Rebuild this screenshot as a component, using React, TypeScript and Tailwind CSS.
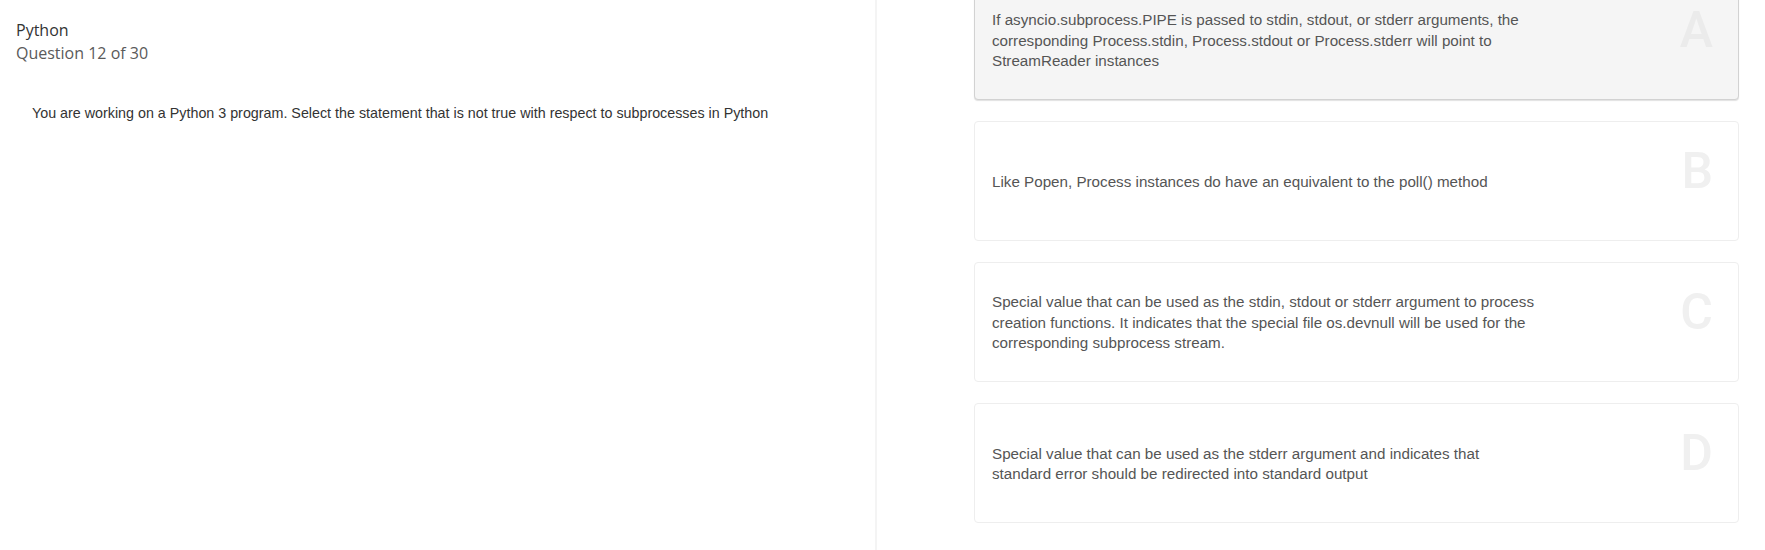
import React from "react";

const options = [
  {
    letter: "A",
    text: "If asyncio.subprocess.PIPE is passed to stdin, stdout, or stderr arguments, the corresponding Process.stdin, Process.stdout or Process.stderr will point to StreamReader instances",
    selected: true,
  },
  {
    letter: "B",
    text: "Like Popen, Process instances do have an equivalent to the poll() method",
    selected: false,
  },
  {
    letter: "C",
    text: "Special value that can be used as the stdin, stdout or stderr argument to process creation functions. It indicates that the special file os.devnull will be used for the corresponding subprocess stream.",
    selected: false,
  },
  {
    letter: "D",
    text: "Special value that can be used as the stderr argument and indicates that standard error should be redirected into standard output",
    selected: false,
  },
];

export default function App() {
  return (
    <div className="flex h-[550px] w-full overflow-hidden bg-white">
      <div className="w-[877px] shrink-0 border-r-2 border-[#f4f4f4] pt-[19px]">
        <div className="pl-[16px] font-['Open_Sans',sans-serif] text-[16px] leading-[23px]">
          <div className="text-[#333333]">Python</div>
          <div className="text-[#5a5a5a]">Question 12 of 30</div>
        </div>
        <p className="mt-[39px] pl-[32px] font-['Liberation_Sans',Arial,sans-serif] text-[14.3px] leading-[18px] text-[#333333]">
          You are working on a Python 3 program. Select the statement that is not true with respect to subprocesses in Python
        </p>
      </div>
      <div className="mt-[-20px] flex flex-1 flex-col gap-[21px] pl-[97px] pr-[26px]">
        {options.map((o) => (
          <div
            key={o.letter}
            className={
              "relative flex h-[120px] shrink-0 items-center rounded-[4px] border pl-[17px] pt-[2px] " +
              (o.selected
                ? "border-[#d2d2d2] bg-[#f5f5f5] shadow-[0_1px_1px_rgba(0,0,0,0.12)]"
                : "border-[#eeeeee] bg-white")
            }
          >
            <p className="w-[546px] font-['Liberation_Sans',Arial,sans-serif] text-[15.2px] leading-[20.5px] text-[#555555]">
              {o.text}
            </p>
            <span
              className={
                "absolute right-[25px] top-[24px] font-['Roboto',sans-serif] text-[50px] font-medium leading-[50px] " +
                (o.selected ? "text-[#ebebeb]" : "text-[#f0f0f0]")
              }
            >
              {o.letter}
            </span>
          </div>
        ))}
      </div>
    </div>
  );
}
